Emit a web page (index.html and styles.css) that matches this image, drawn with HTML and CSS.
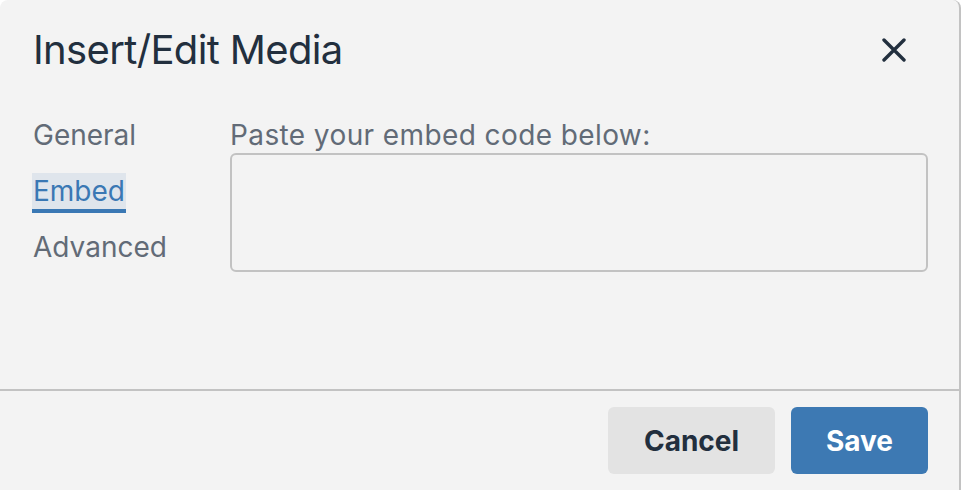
FILE: index.html
```html
<!DOCTYPE html>
<html lang="en">
<head>
<meta charset="utf-8">
<title>Insert/Edit Media</title>
<link rel="stylesheet" href="styles.css">
</head>
<body>
<div class="dialog">
  <div class="header">
    <h1 class="title">Insert/Edit Media</h1>
    <button class="close" aria-label="Close">
      <svg width="24" height="24" viewBox="0 0 24 24"><path d="M2 2 L22 22 M22 2 L2 22" stroke="#222f3e" stroke-width="3.4" stroke-linecap="round" fill="none"/></svg>
    </button>
  </div>
  <div class="body">
    <div class="tabs">
      <div class="tab">General</div>
      <div class="tab active">Embed</div>
      <div class="tab">Advanced</div>
    </div>
    <div class="panel">
      <label class="label">Paste your embed code below:</label>
      <div class="textarea"></div>
    </div>
  </div>
  <div class="footer">
    <button class="btn secondary">Cancel</button>
    <button class="btn primary">Save</button>
  </div>
</div>
</body>
</html>
```
FILE: styles.css
```css
html, body {
  margin: 0;
  padding: 0;
  background: #ffffff;
}
body {
  font-family: Inter, "Noto Sans", sans-serif;
  color: #222f3e;
}
.dialog {
  width: 959px;
  height: 490px;
  background: #f3f3f3;
  border-right: 2px solid #c2c2c2;
  border-radius: 8px 8px 0 0;
  display: flex;
  flex-direction: column;
  box-sizing: content-box;
}
.header {
  display: flex;
  align-items: center;
  justify-content: space-between;
  padding: 26px 31px 43px 33px;
}
.title {
  margin: 0;
  font-size: 40px;
  line-height: 48px;
  font-weight: 400;
  letter-spacing: -0.65px;
  color: #222f3e;
}
.close {
  background: none;
  border: 0;
  padding: 0;
  width: 46px;
  height: 46px;
  display: flex;
  align-items: center;
  justify-content: center;
  margin-right: 11px;
}
.close svg { display: block; }
.body {
  flex: 1;
  display: flex;
  padding: 0 31px 0 32px;
}
.tabs {
  width: 198px;
  display: flex;
  flex-direction: column;
  align-items: flex-start;
  gap: 16px;
}
.tab {
  font-size: 28px;
  line-height: 36px;
  color: #626b77;
  border-bottom: 4px solid transparent;
  padding: 0 1px;
}
.tab.active {
  color: #3a78b4;
  background: #dfe5ec;
  border-bottom-color: #3a78b4;
}
.panel {
  flex: 1;
  display: flex;
  flex-direction: column;
}
.label {
  font-size: 28px;
  line-height: 36px;
  letter-spacing: 0.4px;
  color: #626b77;
}
.textarea {
  height: 115px;
  border: 2px solid #c2c2c2;
  border-radius: 6px;
  background: #f3f3f3;
}
.footer {
  border-top: 2px solid #c2c2c2;
  padding: 16px 31px 16px 32px;
  display: flex;
  justify-content: flex-end;
  gap: 16px;
}
.btn {
  height: 67px;
  border: 0;
  border-radius: 6px;
  font-family: Inter, "Noto Sans", sans-serif;
  font-size: 28px;
  font-weight: 700;
  padding: 0;
}
.btn.secondary {
  width: 167px;
  background: #e3e3e3;
  color: #222f3e;
}
.btn.primary {
  width: 137px;
  background: #3d79b3;
  color: #ffffff;
}
```
